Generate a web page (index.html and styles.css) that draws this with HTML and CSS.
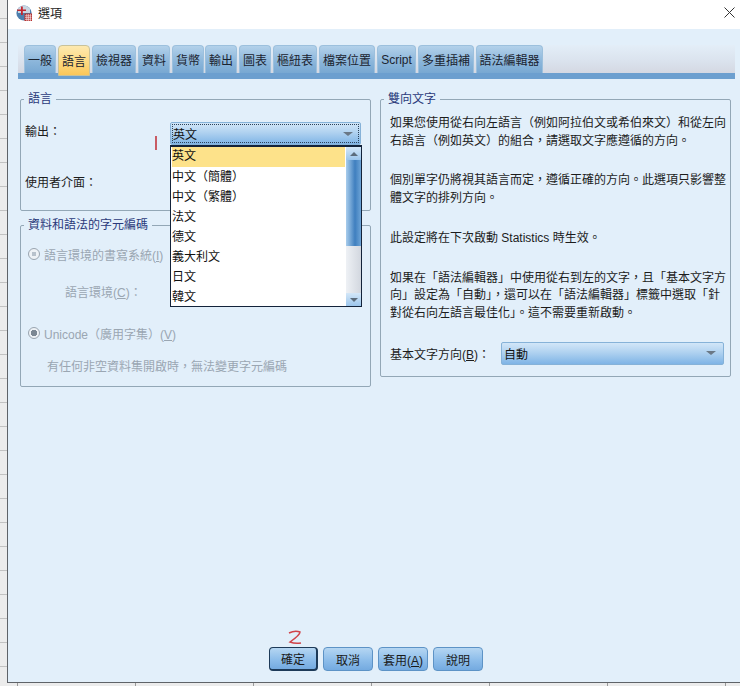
FILE: index.html
```html
<!DOCTYPE html>
<html lang="zh-Hant">
<head>
<meta charset="utf-8">
<title>選項</title>
<link rel="stylesheet" href="styles.css">
</head>
<body>
<div class="desk">
  <div class="window">
    <header class="titlebar">
      <svg class="appicon" viewBox="0 0 16 16" aria-hidden="true">
        <circle cx="8" cy="8" r="7.6" fill="#4d7fae"/>
        <path d="M2 3.5A7.6 7.6 0 0 1 14 3.5V8H2Z" fill="#c9d6e2"/>
        <path d="M5 1.5h1.8v3H10v1.6H6.8V10H5V6.1H1.2V4.5H5Z" fill="#c4262e"/>
        <rect x="8.5" y="8.5" width="7.5" height="7.5" fill="#b5302f"/>
        <path d="M9 10.8h6.5M9 12.6h6.5M9 14.4h6.5M10.8 9v7M12.6 9v7M14.4 9v7" stroke="#f2dcdc" stroke-width=".7"/>
      </svg>
      <span class="title">選項</span>
      <svg class="close" viewBox="0 0 11 11" aria-hidden="true"><path d="M.5.5l10 10M10.5.5l-10 10" stroke="#333" stroke-width="1" fill="none"/></svg>
    </header>
    <div class="dialog">
      <nav class="tabs">
        <span class="tab w32">一般</span>
        <span class="tab w32 active">語言</span>
        <span class="tab w44">檢視器</span>
        <span class="tab w32">資料</span>
        <span class="tab w32">貨幣</span>
        <span class="tab w32 tight">輸出</span>
        <span class="tab w32">圖表</span>
        <span class="tab w44">樞紐表</span>
        <span class="tab w56">檔案位置</span>
        <span class="tab w38">Script</span>
        <span class="tab w56">多重插補</span>
        <span class="tab w67">語法編輯器</span>
      </nav>
      <div class="tabbar"></div>
      <main class="panes">
        <div class="column">
          <fieldset class="group lang">
            <legend>語言</legend>
            <div class="row output">
              <span class="label">輸出：</span>
              <div class="combo focus"><span>英文</span><i class="arrow"></i>
                <div class="menu">
                  <ul class="items">
                    <li class="sel">英文</li>
                    <li>中文（簡體）</li>
                    <li>中文（繁體）</li>
                    <li>法文</li>
                    <li>德文</li>
                    <li>義大利文</li>
                    <li>日文</li>
                    <li>韓文</li>
                  </ul>
                  <div class="scroll">
                    <div class="sbtn"><i class="up"></i></div>
                    <div class="thumb"></div>
                    <div class="track"></div>
                    <div class="sbtn"><i class="down"></i></div>
                  </div>
                </div>
              </div>
            </div>
            <div class="row ui"><span class="label">使用者介面：</span></div>
          </fieldset>
          <fieldset class="group enc">
            <legend>資料和語法的字元編碼</legend>
            <div class="radio first"><i class="dot off"></i><span>語言環境的書寫系統(<u>I</u>)</span></div>
            <div class="locale">語言環境(<u>C</u>)：</div>
            <div class="radio second"><i class="dot on"></i><span>Unicode（廣用字集）(<u>V</u>)</span></div>
            <p class="note">有任何非空資料集開啟時，無法變更字元編碼</p>
          </fieldset>
        </div>
        <fieldset class="group bidi">
          <legend>雙向文字</legend>
          <p>如果您使用從右向左語言（例如阿拉伯文或希伯來文）和從左向右語言（例如英文）的組合，請選取文字應遵循的方向。</p>
          <p>個別單字仍將視其語言而定，遵循正確的方向。此選項只影響整體文字的排列方向。</p>
          <p>此設定將在下次啟動 Statistics 時生效。</p>
          <p>如果在「語法編輯器」中使用從右到左的文字，且「基本文字方向」設定為「自動」，還可以在「語法編輯器」標籤中選取「針對從右向左語言最佳化」。這不需要重新啟動。</p>
          <div class="basedir">
            <span class="label">基本文字方向(<u>B</u>)：</span>
            <div class="combo auto"><span>自動</span><i class="arrow"></i></div>
          </div>
        </fieldset>
      </main>
      <footer class="buttons">
        <button class="btn default">確定</button>
        <button class="btn">取消</button>
        <button class="btn">套用(<u>A</u>)</button>
        <button class="btn">說明</button>
      </footer>
      <svg class="mark one" viewBox="0 0 4 16" aria-hidden="true"><path d="M2 1L2 15" stroke="#c2363f" stroke-width="1.6" fill="none"/></svg>
      <svg class="mark two" viewBox="0 0 16 16" aria-hidden="true"><path d="M2 3Q8 0 13 2Q13 5 3 12Q8 14 14 13" stroke="#d0434a" stroke-width="1.5" fill="none"/></svg>
    </div>
  </div>
</div>
</body>
</html>
```

FILE: styles.css
```css
* { box-sizing: border-box; }
html, body { margin: 0; padding: 0; }
body {
  width: 740px;
  height: 686px;
  overflow: hidden;
  font-family: "Liberation Sans", "Noto Sans CJK TC", sans-serif;
  font-size: 12px;
  color: #1c1c1c;
}
.desk {
  width: 740px;
  height: 686px;
  padding: 0 0 3px 7px;
  background-color: #ececec;
  background-image:
    repeating-linear-gradient(to right, transparent 0, transparent 17px, #9a9a9a 17px, #9a9a9a 18px, transparent 18px, transparent 118px),
    repeating-linear-gradient(to bottom, #ececec 0, #ececec 18px, #c2c2c2 18px, #c2c2c2 19px, #ececec 19px, #ececec 24px);
}
.window {
  height: 683px;
  border-left: 1px solid #5f6368;
  border-bottom: 1px solid #5f6368;
  display: flex;
  flex-direction: column;
  background: #e2effa;
}
.titlebar {
  height: 29px;
  flex: none;
  background: #fff;
  display: flex;
  align-items: center;
  padding: 0 5px 4px 8px;
}
.appicon { width: 16px; height: 16px; flex: none; }
.title { margin-left: 6px; font-size: 12px; color: #222; }
.close { width: 11px; height: 11px; margin-left: auto; }
.dialog {
  position: relative;
  flex: 1;
  padding: 16px 5px 0 10px;
  display: flex;
  flex-direction: column;
  background: #e2effa;
}
.tabs {
  height: 28px;
  display: flex;
  gap: 2px;
  padding-left: 6px;
  background-image: linear-gradient(to bottom, #e3eef8 0, #dbe3ee 55%, #d4d8e2 100%);
}
.tab {
  height: 28px;
  display: flex;
  align-items: center;
  justify-content: center;
  border: 1px solid #9cc0dd;
  border-bottom: 0;
  border-radius: 4px 4px 0 0;
  background: linear-gradient(to bottom, #b3d1ea 0, #8ab5da 60%, #78a8d2 100%);
  color: #1b2430;
  white-space: nowrap;
}
.tab.active {
  height: 31px;
  border: 1px solid #c8c29a;
  background: linear-gradient(to bottom, #fde9b0 0, #fdd77c 60%, #fbc75a 100%);
  position: relative;
  z-index: 1;
}
.tab.tight { margin-left: -1px; }
.w32 { width: 32px; }
.w38 { width: 39px; }
.w44 { width: 44px; }
.w56 { width: 56px; }
.w67 { width: 67px; }
.tabbar { height: 6px; flex: none; background: #6c9fcf; }
.panes {
  display: flex;
  align-items: flex-start;
  gap: 9px;
  padding: 12px 3px 0 2px;
}
.column { width: 351px; display: flex; flex-direction: column; gap: 6px; }
.group {
  margin: 0;
  min-width: 0;
  border: 1px solid #93a7b6;
  border-radius: 2px;
  padding: 0;
  color: #1c1c1c;
}
.group legend {
  padding: 0 4px;
  line-height: 16px;
  font-size: 12px;
  color: #2b3a7a;
}
.lang { height: 120px; padding: 0 9px 0 4px; }
.lang legend { margin-left: -1px; }
.enc legend { margin-left: 3px; }
.bidi legend { margin-left: -6px; }
.row { display: flex; align-items: center; }
.output { height: 23px; margin-top: 15px; position: relative; }
.output .label { width: 145px; flex: none; align-self: flex-start; }
.ui { height: 18px; margin-top: 27px; }
.label { white-space: nowrap; }
.combo {
  display: flex;
  align-items: center;
  justify-content: space-between;
  height: 23px;
  border: 1px solid #86b2d8;
  border-radius: 2px;
  padding: 0 7px 0 2px;
  background: linear-gradient(to bottom, #d2e6f8 0, #b0d2f0 45%, #7fb4e6 100%);
  color: #111;
}
.combo.focus {
  width: 192px;
  position: relative;
  outline: 1px dotted #2c4258;
  outline-offset: -3px;
}
.arrow {
  width: 0;
  height: 0;
  border-left: 5px solid transparent;
  border-right: 5px solid transparent;
  border-top: 4px solid #6a7886;
}
.menu {
  position: absolute;
  left: -1px;
  top: 22px;
  width: 192px;
  height: 162px;
  display: flex;
  background: #fff;
  border: 1px solid #13233a;
  border-top-width: 2px;
  z-index: 5;
}
.items {
  list-style: none;
  margin: 0;
  padding: 0 1px;
  flex: 1;
}
.items li { height: 20px; line-height: 20px; color: #111; white-space: nowrap; }
.items li.sel { background: #fde28a; line-height: 19px; }
.scroll { width: 15px; flex: none; display: flex; flex-direction: column; background: #dfe4ec; }
.sbtn {
  height: 13px;
  flex: none;
  display: flex;
  align-items: center;
  justify-content: center;
  background: linear-gradient(to bottom, #d4e7f8, #9cc6ec);
}
.sbtn .up, .sbtn .down {
  width: 0;
  height: 0;
  border-left: 4px solid transparent;
  border-right: 4px solid transparent;
}
.sbtn .up { border-bottom: 4px solid #5c6c7c; }
.sbtn .down { border-top: 4px solid #5c6c7c; }
.thumb { height: 86px; flex: none; background: linear-gradient(to right, #a9cdec, #3f7fbf 60%, #6ea4d6); }
.track { flex: 1; background: linear-gradient(to right, #eef1f5, #d2d7df); }
.enc { height: 170px; color: #9aa6b2; }
.radio { display: flex; align-items: center; gap: 4px; height: 16px; padding-left: 7px; color: #9aa6b2; }
.radio.first { margin-top: 13px; }
.radio.second { margin-top: 24px; }
.dot {
  width: 12px;
  height: 12px;
  flex: none;
  border-radius: 50%;
  border: 1px solid #9aa5b0;
  background: radial-gradient(circle, #b8c2cc 0, #b8c2cc 32%, #eef2f6 36%, #eef2f6 100%);
}
.dot.on { background: radial-gradient(circle, #7c8894 0, #7c8894 42%, #eef2f6 46%, #eef2f6 100%); }
.locale { margin: 23px 0 0 44px; line-height: 16px; color: #9aa6b2; }
.note { margin: 18px 0 0 26px; line-height: 16px; color: #9aa6b2; }
.bidi { width: 351px; height: 286px; padding: 0 4px 0 9px; }
.bidi p { margin: 0 0 22px; line-height: 17.7px; color: #1c1c1c; }
.bidi p:first-of-type { margin-top: 8px; }
.basedir { display: flex; align-items: center; margin-top: -3px; margin-right: 2px; }
.basedir .label { width: 111px; flex: none; }
.auto { flex: 1; }
.buttons {
  margin-top: auto;
  display: flex;
  gap: 5px;
  padding: 0 0 11px 251px;
}
.btn {
  width: 50px;
  height: 24px;
  padding: 0;
  border: 1px solid #5d93c6;
  border-radius: 4px;
  background: linear-gradient(to bottom, #b5d6f2 0, #8dbdea 55%, #74aae0 100%);
  font: inherit;
  color: #1a1a1a;
}
.btn.default { width: 49px; border: 1px solid #1d3a58; border-width: 1px 2px 2px 1px; }
.mark { position: absolute; }
.mark.one { width: 4px; height: 16px; left: 146px; top: 106px; }
.mark.two { width: 16px; height: 16px; left: 279px; top: 601px; }
```
